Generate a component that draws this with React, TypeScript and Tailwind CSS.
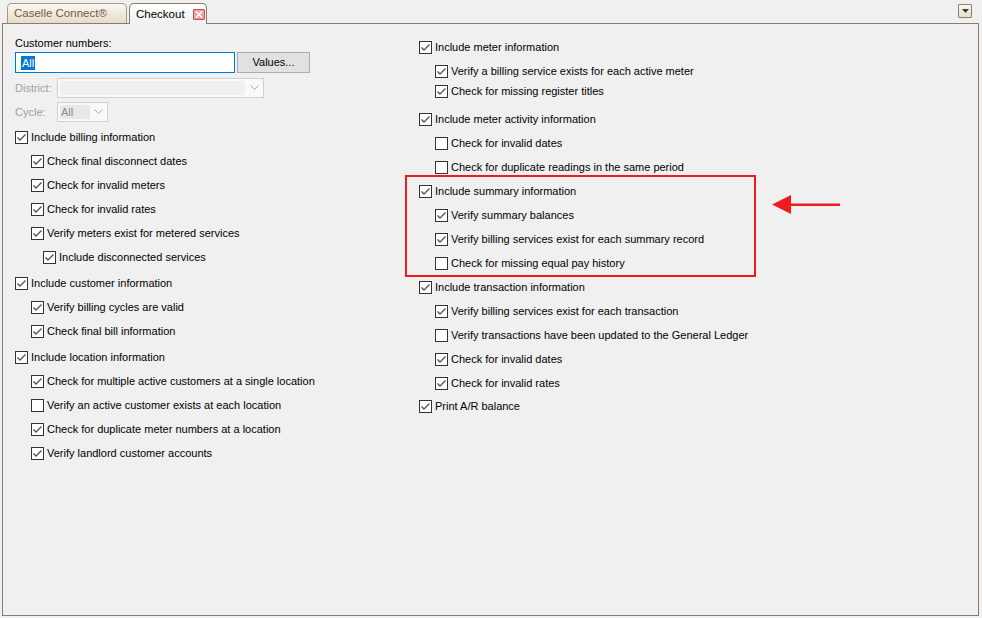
import React from "react";

type Row = { label: string; checked: boolean; level: number; gap: number };

const gapClass: Record<number, string> = {
  0: "mt-0",
  3: "mt-[3px]",
  4: "mt-[4px]",
  6: "mt-[6px]",
  8: "mt-[8px]",
};

const levelClass: Record<number, string> = {
  0: "pl-0",
  1: "pl-[16px]",
  2: "pl-[28px]",
};

const leftRows: Row[] = [
  { label: "Include billing information", checked: true, level: 0, gap: 0 },
  { label: "Check final disconnect dates", checked: true, level: 1, gap: 4 },
  { label: "Check for invalid meters", checked: true, level: 1, gap: 4 },
  { label: "Check for invalid rates", checked: true, level: 1, gap: 4 },
  { label: "Verify meters exist for metered services", checked: true, level: 1, gap: 4 },
  { label: "Include disconnected services", checked: true, level: 2, gap: 4 },
  { label: "Include customer information", checked: true, level: 0, gap: 6 },
  { label: "Verify billing cycles are valid", checked: true, level: 1, gap: 4 },
  { label: "Check final bill information", checked: true, level: 1, gap: 4 },
  { label: "Include location information", checked: true, level: 0, gap: 6 },
  { label: "Check for multiple active customers at a single location", checked: true, level: 1, gap: 4 },
  { label: "Verify an active customer exists at each location", checked: false, level: 1, gap: 4 },
  { label: "Check for duplicate meter numbers at a location", checked: true, level: 1, gap: 4 },
  { label: "Verify landlord customer accounts", checked: true, level: 1, gap: 4 },
];

const rightRows: Row[] = [
  { label: "Include meter information", checked: true, level: 0, gap: 0 },
  { label: "Verify a billing service exists for each active meter", checked: true, level: 1, gap: 4 },
  { label: "Check for missing register titles", checked: true, level: 1, gap: 0 },
  { label: "Include meter activity information", checked: true, level: 0, gap: 8 },
  { label: "Check for invalid dates", checked: false, level: 1, gap: 4 },
  { label: "Check for duplicate readings in the same period", checked: false, level: 1, gap: 4 },
  { label: "Include summary information", checked: true, level: 0, gap: 4 },
  { label: "Verify summary balances", checked: true, level: 1, gap: 4 },
  { label: "Verify billing services exist for each summary record", checked: true, level: 1, gap: 4 },
  { label: "Check for missing equal pay history", checked: false, level: 1, gap: 4 },
  { label: "Include transaction information", checked: true, level: 0, gap: 4 },
  { label: "Verify billing services exist for each transaction", checked: true, level: 1, gap: 4 },
  { label: "Verify transactions have been updated to the General Ledger", checked: false, level: 1, gap: 4 },
  { label: "Check for invalid dates", checked: true, level: 1, gap: 4 },
  { label: "Check for invalid rates", checked: true, level: 1, gap: 4 },
  { label: "Print A/R balance", checked: true, level: 0, gap: 3 },
];

function CheckBox({ checked }: { checked: boolean }) {
  return (
    <span className="w-[13px] h-[13px] border border-[#333333] bg-white flex items-center justify-center shrink-0">
      {checked && (
        <svg width="11" height="11" viewBox="0 0 11 11">
          <path d="M1.5 5.5 L4 8 L9.5 2.5" fill="none" stroke="#555555" strokeWidth="1.4" />
        </svg>
      )}
    </span>
  );
}

function CheckRow({ row }: { row: Row }) {
  return (
    <div className={`h-[20px] flex items-center gap-[3px] ${gapClass[row.gap]} ${levelClass[row.level]}`}>
      <CheckBox checked={row.checked} />
      <span className="text-black whitespace-nowrap">{row.label}</span>
    </div>
  );
}

function Chevron() {
  return (
    <svg width="9" height="6" viewBox="0 0 9 6">
      <path d="M0.5 0.5 L4.5 4.5 L8.5 0.5" fill="none" stroke="#a8a8a8" strokeWidth="1" />
    </svg>
  );
}

export default function App() {
  return (
    <div
      className="w-[982px] h-[618px] bg-[#f0f0f0] relative overflow-hidden text-[11px] leading-[13px]"
      style={{ fontFamily: '"Liberation Sans", Arial, sans-serif' }}
    >
      {/* Tab strip */}
      <div className="relative z-10 h-[24px] flex items-end pl-[7px] gap-[2px]">
        <div className="h-[20px] w-[120px] mb-[1px] rounded-t-[5px] border border-b-0 border-[#a69886] bg-gradient-to-b from-[#fbf8f1] to-[#e6dcc8] flex items-center pl-[6px] text-[#6e5c4c] text-[11.5px]">
          Caselle Connect®
        </div>
        <div className="h-[21px] w-[78px] rounded-t-[5px] border border-b-0 border-[#8e7b6d] bg-gradient-to-b from-[#ffffff] to-[#f0f0f0] flex items-center pl-[6px] text-black text-[11.5px]">
          <span>Checkout</span>
          <span className="ml-[8px] w-[12px] h-[11px] bg-[#f0a0a0] border border-[#c05050] rounded-[1px] flex items-center justify-center">
            <svg width="8" height="7" viewBox="0 0 8 7">
              <path d="M1 0.5 L7 6.5 M7 0.5 L1 6.5" stroke="#ffffff" strokeWidth="1.6" />
            </svg>
          </span>
        </div>
        <div className="ml-auto mr-[10px] self-start mt-[4px] w-[14px] h-[14px] border border-[#8e7b6d] rounded-[1px] bg-gradient-to-b from-[#fbf8f1] to-[#e8dfcc] flex items-center justify-center">
          <svg width="7" height="4" viewBox="0 0 7 4">
            <path d="M0 0 L7 0 L3.5 4 Z" fill="#3a3a3a" />
          </svg>
        </div>
      </div>

      {/* Panel */}
      <div className="-mt-[1px] ml-[2px] w-[977px] h-[593px] border border-[#8e7b6d] flex">
        {/* Left column */}
        <div className="w-[416px] pl-[12px] pt-[13px] flex flex-col">
          <div className="h-[13px] text-black">Customer numbers:</div>
          <div className="mt-[2px] flex gap-[2px]">
            <div className="w-[220px] h-[21px] border border-[#0078d7] bg-white flex items-center pl-[5px]">
              <span className="bg-[#0078d7] text-white leading-[14px] px-px">All</span>
            </div>
            <div className="w-[73px] h-[21px] border border-[#adadad] bg-[#e1e1e1] flex items-center justify-center text-black">
              Values...
            </div>
          </div>
          <div className="mt-[5px] h-[20px] flex items-center">
            <span className="w-[42px] text-[#a0a0a0]">District:</span>
            <div className="w-[207px] h-[20px] border border-[#d0d0d0] bg-[#f9f9f9] flex items-center pl-[2px]">
              <div className="w-[185px] h-[14px] bg-[#f0f0f0]" />
              <div className="flex-1 flex justify-center">
                <Chevron />
              </div>
            </div>
          </div>
          <div className="mt-[4px] h-[20px] flex items-center">
            <span className="w-[42px] text-[#a0a0a0]">Cycle:</span>
            <div className="w-[51px] h-[20px] border border-[#d0d0d0] bg-[#f9f9f9] flex items-center pl-[2px]">
              <div className="w-[30px] h-[14px] bg-[#e8e8e8] text-[#8a8a8a] flex items-center pl-px">All</div>
              <div className="flex-1 flex justify-center">
                <Chevron />
              </div>
            </div>
          </div>
          <div className="mt-[5px] flex flex-col">
            {leftRows.map((r, i) => (
              <CheckRow key={i} row={r} />
            ))}
          </div>
        </div>

        {/* Right column */}
        <div className="pt-[13px] flex flex-col">
          {rightRows.map((r, i) => (
            <CheckRow key={i} row={r} />
          ))}
        </div>
      </div>

      {/* Red highlight box */}
      <div className="absolute left-[405px] top-[175px] w-[351px] h-[102px] border-2 border-[#ee1c1c]" />

      {/* Arrow */}
      <svg className="absolute left-[772px] top-[194px]" width="70" height="22" viewBox="0 0 70 22">
        <path d="M0 10.5 L19 1 L19 20 Z" fill="#ee1c1c" />
        <rect x="18" y="9.5" width="50" height="2.5" fill="#ee1c1c" />
      </svg>
    </div>
  );
}
